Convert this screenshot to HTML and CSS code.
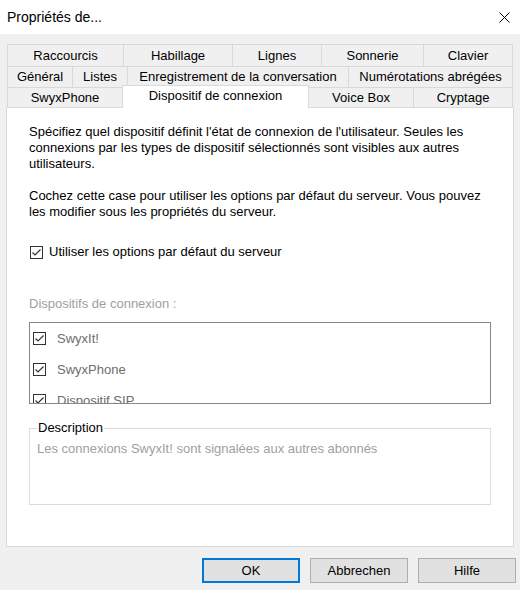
FILE: index.html
```html
<!DOCTYPE html>
<html>
<head>
  <title>Propriétés de...</title>
  <link rel="stylesheet" href="styles.css">
</head>
<body>
  <div class="titlebar">
    <span class="title">Propriétés de...</span>
    <svg class="close" width="11" height="11" viewBox="0 0 11 11">
      <path d="M0.5 0.5 L10.5 10.5 M10.5 0.5 L0.5 10.5" stroke="#000" stroke-width="1" fill="none"/>
    </svg>
  </div>

  <div class="dialog">
    <div class="tabs">
      <div class="tab-row row-1">
        <div class="tab">Raccourcis</div>
        <div class="tab">Habillage</div>
        <div class="tab">Lignes</div>
        <div class="tab">Sonnerie</div>
        <div class="tab last">Clavier</div>
      </div>
      <div class="tab-row row-2">
        <div class="tab">Général</div>
        <div class="tab">Listes</div>
        <div class="tab">Enregistrement de la conversation</div>
        <div class="tab last">Numérotations abrégées</div>
      </div>
      <div class="tab-row row-3">
        <div class="tab">SwyxPhone</div>
        <div class="tab selected">Dispositif de connexion</div>
        <div class="tab">Voice Box</div>
        <div class="tab last">Cryptage</div>
      </div>
    </div>

    <div class="panel">
      <p class="intro">Spécifiez quel dispositif définit l'état de connexion de l'utilisateur. Seules les connexions par les types de dispositif sélectionnés sont visibles aux autres utilisateurs.</p>
      <p class="intro">Cochez cette case pour utiliser les options par défaut du serveur. Vous pouvez les modifier sous les propriétés du serveur.</p>

      <label class="check-row">
        <svg class="box" width="13" height="13" viewBox="0 0 13 13">
          <rect x="0.5" y="0.5" width="12" height="12" fill="#fff" stroke="#333"/>
          <path d="M2.5 6.5 L5 9 L10.5 3.5" stroke="#333" stroke-width="1.2" fill="none"/>
        </svg>
        <span>Utiliser les options par défaut du serveur</span>
      </label>

      <div class="list-label">Dispositifs de connexion :</div>
      <div class="device-list">
        <div class="device">
          <svg class="box" width="13" height="13" viewBox="0 0 13 13">
            <rect x="0.5" y="0.5" width="12" height="12" fill="#fff" stroke="#333"/>
            <path d="M2.5 6.5 L5 9 L10.5 3.5" stroke="#333" stroke-width="1.2" fill="none"/>
          </svg>
          <span>SwyxIt!</span>
        </div>
        <div class="device">
          <svg class="box" width="13" height="13" viewBox="0 0 13 13">
            <rect x="0.5" y="0.5" width="12" height="12" fill="#fff" stroke="#333"/>
            <path d="M2.5 6.5 L5 9 L10.5 3.5" stroke="#333" stroke-width="1.2" fill="none"/>
          </svg>
          <span>SwyxPhone</span>
        </div>
        <div class="device">
          <svg class="box" width="13" height="13" viewBox="0 0 13 13">
            <rect x="0.5" y="0.5" width="12" height="12" fill="#fff" stroke="#333"/>
            <path d="M2.5 6.5 L5 9 L10.5 3.5" stroke="#333" stroke-width="1.2" fill="none"/>
          </svg>
          <span>Dispositif SIP</span>
        </div>
      </div>

      <fieldset class="description">
        <legend>Description</legend>
        <p>Les connexions SwyxIt! sont signalées aux autres abonnés</p>
      </fieldset>
    </div>

    <div class="buttons">
      <button class="default">OK</button>
      <button>Abbrechen</button>
      <button>Hilfe</button>
    </div>
  </div>
</body>
</html>
```

FILE: styles.css
```css
body {
  margin: 0;
  font-family: "Liberation Sans", Arial, sans-serif;
  font-size: 13px;
  color: #000;
  background: #f0f0f0;
}

.titlebar {
  height: 34px;
  background: #fff;
  display: flex;
  align-items: center;
  justify-content: space-between;
  padding: 0 10px 0 7px;
  box-sizing: border-box;
}
.title {
  font-size: 14px;
}

.dialog {
  height: 556px;
  padding-top: 10px;
  box-sizing: border-box;
}

/* tab strip */
.tabs {
  margin-left: 7px;
  width: 506px;
}
.tab-row {
  display: grid;
}
.row-1 {
  grid-template-columns: 116px 109px 89px 102px 90px;
  height: 22px;
}
.row-2 {
  grid-template-columns: 65px 55px 221px 165px;
  height: 21px;
}
.row-3 {
  grid-template-columns: 115px 186px 105px 100px;
  height: 20px;
}
.tab {
  display: flex;
  align-items: center;
  justify-content: center;
  border-top: 1px solid #d9d9d9;
  border-left: 1px solid #d9d9d9;
  box-sizing: border-box;
  line-height: 16px;
  white-space: nowrap;
}
.tab.last {
  border-right: 1px solid #d9d9d9;
}
.tab.selected {
  background: #fff;
  border-right: 1px solid #d9d9d9;
  margin: -2px -1px -1px 0;
  align-items: flex-start;
  padding-top: 2px;
  z-index: 1;
}

/* page */
.panel {
  margin-left: 6px;
  width: 508px;
  height: 440px;
  background: #fff;
  border: 1px solid #d9d9d9;
  box-sizing: border-box;
  padding: 16px 22px 0 22px;
  line-height: 16px;
}
.intro {
  margin: 0 0 16px;
}
.intro + .intro {
  margin-bottom: 24px;
}

.check-row {
  display: flex;
  align-items: center;
  gap: 6px;
  margin-left: 1px;
}

.list-label {
  margin-top: 36px;
  color: #a0a0a0;
}

.device-list {
  margin-top: 10px;
  width: 462px;
  height: 82px;
  border: 1px solid #828790;
  box-sizing: border-box;
  overflow: hidden;
}
.device {
  height: 31px;
  display: flex;
  align-items: center;
  gap: 11px;
  padding-left: 3px;
  color: #6d6d6d;
  flex-shrink: 0;
}

.description {
  margin: 16px 0 0;
  width: 462px;
  box-sizing: border-box;
  padding: 0 7px;
  border: 1px solid #dcdcdc;
}
.description legend {
  padding: 0 1px;
}
.description p {
  margin: 5px 0 0;
  min-height: 63px;
  color: #a0a0a0;
}

/* dialog buttons */
.buttons {
  display: flex;
  justify-content: flex-end;
  gap: 10px;
  margin-top: 11px;
  padding-right: 4px;
}
button {
  width: 98px;
  height: 25px;
  background: #e1e1e1;
  border: 1px solid #adadad;
  font-family: "Liberation Sans", Arial, sans-serif;
  font-size: 13px;
  color: #000;
  padding: 0;
}
button.default {
  border: 2px solid #0078d7;
}
```
